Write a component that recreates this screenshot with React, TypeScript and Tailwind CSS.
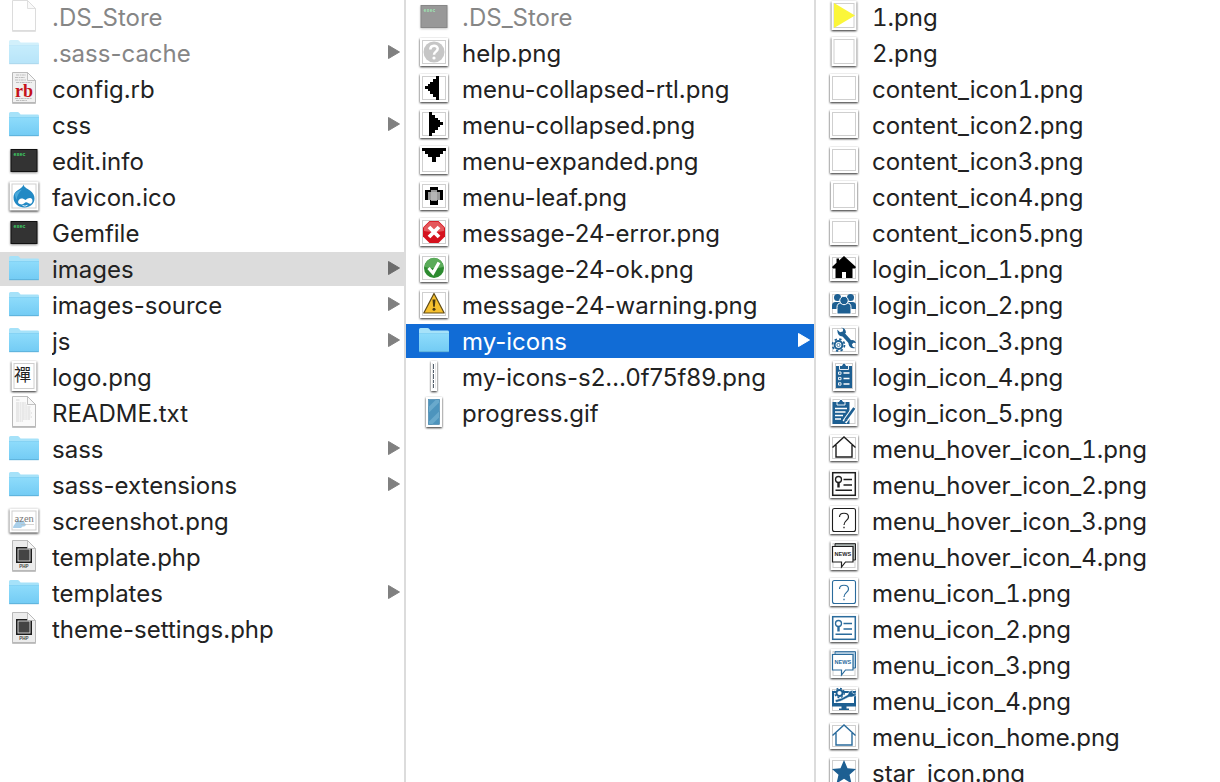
import { useState, type ReactNode } from "react";

type IconProps = { children: ReactNode; dim?: boolean };

function Glyph({ children, dim }: IconProps) {
  return (
    <svg
      viewBox="0 0 32 32"
      aria-hidden="true"
      className={`h-8 w-8 shrink-0 overflow-visible ${dim ? "opacity-50" : ""}`}
    >
      {children}
    </svg>
  );
}

function Folder({ dim }: { dim?: boolean }) {
  return (
    <Glyph dim={dim}>
      <defs>
        <linearGradient id="folderBody" x1="0" y1="0" x2="0" y2="1">
          <stop offset="0" stopColor="#8fdcfb" />
          <stop offset="1" stopColor="#72cbf4" />
        </linearGradient>
      </defs>
      <path d="M1 27V5.5Q1 4 2.5 4H9.5Q10.6 4 11.3 5L12.6 6.6H29.5Q31 6.6 31 8V27Z" fill="#a6e2f9" />
      <path d="M1 9H31V27Q31 28 30 28H2Q1 28 1 27Z" fill="url(#folderBody)" />
      <path d="M1 9.5H31" stroke="#7fcdf0" strokeWidth="0.6" />
      <path d="M1.2 27.7H30.8" stroke="#5aaed6" strokeWidth="0.9" />
    </Glyph>
  );
}

function Sheet({ children, dim, fill = "#fff" }: { children?: ReactNode; dim?: boolean; fill?: string }) {
  return (
    <Glyph dim={dim}>
      <path
        d="M4.5 0.5H19.5L27.5 8.5V30.5H4.5Z"
        fill={fill}
        stroke="#b4b4b4"
        strokeWidth="0.9"
        className="[filter:drop-shadow(0_1px_0.5px_rgba(0,0,0,0.25))]"
      />
      {children}
      <path d="M19.5 0.5V8.5H27.5Z" fill="#f7f7f7" stroke="#b4b4b4" strokeWidth="0.8" />
    </Glyph>
  );
}

function Exec({ dim }: { dim?: boolean }) {
  return (
    <Glyph dim={dim}>
      <rect x="2.5" y="5" width="27" height="23" rx="0.5" fill="#111" className="[filter:drop-shadow(0_1px_1px_rgba(0,0,0,0.45))]" />
      <rect x="3.5" y="6" width="25" height="21" fill="#333" />
      <text x="5.5" y="11.5" fontSize="5" fontWeight="700" fill="#3fd467" fontFamily="Liberation Mono, monospace">
        exec
      </text>
    </Glyph>
  );
}

function Thumb({ w = 28, h = 28, y, children, frame = true }: { w?: number; h?: number; y?: number; children?: ReactNode; frame?: boolean }) {
  const left = 16 - w / 2;
  const top = y ?? 16 - h / 2;
  return (
    <Glyph>
      <rect x={left} y={top} width={w} height={h} fill="#fff" className="[filter:drop-shadow(0_1px_1px_rgba(0,0,0,0.85))]" />
      {frame && <rect x={left + 2.5} y={top + 2.5} width={w - 5} height={h - 5} fill="#fff" stroke="#cfcfcf" />}
      {children}
    </Glyph>
  );
}

const RubyFile = () => (
  <Sheet fill="#f0f0f0">
    <path d="M8 3H18M7 5.5H17M7 8H18M8 10.5H24M7 26.5H24M8 28.5H19" stroke="#bdbdbd" strokeWidth="1.2" strokeDasharray="3 0.7 1.5 0.5" />
    <text x="16" y="24.6" fontSize="18" fontWeight="700" textAnchor="middle" fill="#c5121b" fontFamily="Liberation Serif, serif">
      rb
    </text>
  </Sheet>
);

const TextFile = () => (
  <Sheet fill="#fafafa">
    <path d="M8 4H12M8 7H18M8 9H19M8 11H23M8 13H22M8 15H23M8 17H24M8 19H23M8 21H24M8 23H22M8 25H15" stroke="#cdcdcd" strokeWidth="0.8" strokeDasharray="3 0.6 1.6 0.5" />
  </Sheet>
);

const PhpFile = () => (
  <Sheet fill="#ececec">
    <rect x="8" y="7" width="16" height="16" fill="#1c1c1c" />
    <rect x="10" y="9" width="12" height="12" fill="#444" stroke="#e2e2e2" strokeWidth="0.9" />
    <text x="16" y="28.3" fontSize="4.5" fontWeight="700" textAnchor="middle" fill="#444" fontFamily="Liberation Sans, sans-serif">
      PHP
    </text>
  </Sheet>
);

const Drupal = () => (
  <Thumb w={29} h={29}>
    <path d="M15.5 4.5C16 7.5 19 8.2 22 10.5C25 12.8 26.5 15.5 26.5 18.5C26.5 24 22 27.5 16.5 27.5C10.5 27.5 5.5 23.5 5.5 17.5C5.5 12.5 9 10.5 12 8.7C14.5 7.2 15 6 15.5 4.5Z" fill="#2289c4" />
    <path d="M6.5 14C8.5 11.5 11 10.5 14 9.5C11 12.5 9 15.5 8.5 20Z" fill="#4aa9da" />
    <path d="M10.5 20.5C12.5 17.5 15.5 18.5 17.5 20C19.5 18.3 22.5 17 24 19C25.5 22 23 24.5 21.3 23.6C20 23 19 21.8 17.7 22.3C16 23.5 14.5 24.7 12.5 24.3C10.3 23.9 9.5 22.3 10.5 20.5Z" fill="#fff" />
    <path d="M14.5 25.4Q17 27 19.5 25.2" fill="none" stroke="#fff" strokeWidth="0.9" />
  </Thumb>
);

const Logo = () => (
  <Thumb w={25} h={30}>
    <text x="14.5" y="20.5" fontSize="17" textAnchor="middle" fill="#222" fontFamily="Noto Sans CJK TC, sans-serif">
      禪
    </text>
  </Thumb>
);

const Screenshot = () => (
  <Thumb w={29} h={24} y={4.5}>
    <path d="M5 24C5 21.5 7 20.5 8 18C8.5 16 11 15.5 12.5 17C14.5 16 17 17.5 17 19.5C19.5 20.5 17 23 14.5 22.5L13 24Z" fill="#a9cfe9" />
    <text x="16.2" y="18" fontSize="10.5" textAnchor="middle" fill="#777" fontFamily="Liberation Serif, serif">
      azen
    </text>
    <path d="M13 20.5H26" stroke="#bbb" strokeWidth="0.6" />
  </Thumb>
);

const Help = () => (
  <Thumb>
    <circle cx="16" cy="16" r="10.5" fill="#c6c6c6" />
    <path d="M12.3 13.5C12.3 8.5 19.7 8.7 19.7 12.8C19.7 15.6 16 15.7 16 18.7" fill="none" stroke="#fff" strokeWidth="2.5" />
    <circle cx="16" cy="22" r="1.6" fill="#fff" />
  </Thumb>
);

const TriLeft = () => (
  <Thumb>
    <path d="M21 4V28H18V25H15V22H12V19H10V17H7V14H10V12H12V10H15V7H18V4Z" />
  </Thumb>
);

const TriRight = () => (
  <Thumb>
    <path d="M11 4V28H14V25H17V22H20V19H22V17H25V14H22V12H20V10H17V7H14V4Z" />
  </Thumb>
);

const TriDown = () => (
  <Thumb>
    <path d="M4 4H28V7H25V10H22V13H18V18H14V13H10V10H7V7H4Z" />
  </Thumb>
);

const Leaf = () => (
  <Thumb>
    <path d="M12 7H20V10H25V20H20V25H12V20H7V10H12Z" />
    <path d="M13 10H19V12H22V20H19V21H13V20H10V12H13Z" fill="#999" />
    <path d="M13 12H19V20H13Z" fill="#b4b4b4" />
  </Thumb>
);

const ErrorMark = () => (
  <Thumb>
    <path d="M11.5 5H20.5L27 11.5V20.5L20.5 27H11.5L5 20.5V11.5Z" fill="#d5121e" />
    <path d="M11.8 5.7H20.2L26 11.5V15Q16 17 6 15V11.5Z" fill="#e4585c" />
    <path d="M11 11L21 21M21 11L11 21" stroke="#fff" strokeWidth="3.8" />
  </Thumb>
);

const OkMark = () => (
  <Thumb>
    <circle cx="16" cy="16" r="10" fill="#2c8a2f" />
    <path d="M6.7 15A9.3 9.3 0 0 1 25.3 15Q16 17.5 6.7 15Z" fill="#5bab5a" />
    <path d="M10.5 16L15 21L21 10.5" fill="none" stroke="#fff" strokeWidth="3.2" />
  </Thumb>
);

const WarningMark = () => (
  <Thumb>
    <path d="M16 5.5L26.2 25H5.8Z" fill="#f6c02e" stroke="#5e4a17" strokeWidth="1.2" strokeLinejoin="round" />
    <path d="M14.5 11.5H17.5L16.8 18.8H15.2Z" fill="#4a3a12" />
    <circle cx="16" cy="21.3" r="1.5" fill="#4a3a12" />
  </Thumb>
);

const Sprite = () => (
  <Thumb w={6} h={30} frame={false}>
    <path d="M14.5 3V28.5M17.5 3V28.5" stroke="#e2e2e2" strokeWidth="0.8" />
    <path d="M15.5 4V28" stroke="#55616d" strokeWidth="1" strokeDasharray="5 1 3 1" />
  </Thumb>
);

const Progress = () => (
  <Thumb w={16} h={30} frame={false}>
    <rect x="10.5" y="3.5" width="11" height="25" fill="#4d94bd" />
    <path d="M10.5 11L18 3.5H21.5V6L10.5 17ZM10.5 26L21.5 15V21L14 28.5H10.5Z" fill="#69a9cc" />
    <rect x="10.5" y="3.5" width="11" height="25" fill="none" stroke="#3b7ea6" strokeWidth="0.6" />
  </Thumb>
);

const YellowPlay = () => (
  <Thumb w={25} h={29} y={1}>
    <path d="M6 3V28L27 15.5Z" fill="#fbf63a" />
  </Thumb>
);

const HomeSolid = () => (
  <Thumb h={26} y={3}>
    <path d="M16 4L28 15L27 16.5H24.5V26H18V20H14V26H7.5V16.5H5L4 15L8.5 10.8V6.5H11V8.6Z" />
  </Thumb>
);

const People = () => (
  <Thumb h={24} y={4}>
    <g fill="#1d5f92">
      <circle cx="9.5" cy="9.5" r="3.5" />
      <circle cx="22.5" cy="9.5" r="3.5" />
      <path d="M4 21V17.5Q4 14 7.5 14H24.5Q28 14 28 17.5V21Z" />
      <path d="M9 26V19.5Q9 15 13 15H19Q23 15 23 19.5V26Z" stroke="#fff" strokeWidth="1" />
      <circle cx="16" cy="12.5" r="4.2" stroke="#fff" strokeWidth="1" />
    </g>
  </Thumb>
);

const Tools = () => (
  <Thumb>
    <path d="M14.5 9.500L23.500 19.500" stroke="#1d5f92" strokeWidth="4" />
    <path d="M9.200 5.500L12 8.200L14.800 7.600L15.200 4.800L13 3.800Q17.500 3.500 18 8.500L14.500 12.500Q9.500 12.500 9.200 5.500Z" fill="#1d5f92" />
    <path d="M20.500 20Q20.500 16.500 24 16Q27 16 28 19L25.300 18.700L23.900 20.500L24.800 22.800L27.500 24Q22 25.500 20.500 20Z" fill="#1d5f92" />
    <circle cx="10.500" cy="21" r="3.900" fill="none" stroke="#1d5f92" strokeWidth="2" />
    <circle cx="10.500" cy="21" r="1.600" fill="none" stroke="#1d5f92" strokeWidth="0.8" />
    <circle cx="10.500" cy="21" r="6" fill="none" stroke="#1d5f92" strokeWidth="1.700" strokeDasharray="2.400 2.312" />
  </Thumb>
);

const Checklist = () => (
  <Thumb w={22} h={30}>
    <path d="M8 6H24V28H8Z" fill="#1d5f92" />
    <path d="M11.5 9.5V5.5H14Q14 3 16 3Q18 3 18 5.5H20.5V9.5Z" fill="#1d5f92" stroke="#fff" strokeWidth="0.9" />
    <path d="M15.5 13H21.5M15.5 18.5H21.5M15.5 24H21.5" stroke="#fff" strokeWidth="1.5" />
    <path d="M10.5 12H13V14.3H10.5ZM10.5 17.4H13V19.7H10.5ZM10.5 22.8H13V25.1H10.5Z" fill="none" stroke="#fff" strokeWidth="0.9" />
  </Thumb>
);

const ClipboardPen = () => (
  <Thumb w={27} h={29} y={1}>
    <path d="M4.5 6H21.5V28H4.5Z" fill="#1d5f92" />
    <path d="M9 9V5.5H11Q11.5 3.3 13 3.3Q14.5 3.3 15 5.500H17V9Z" fill="#1d5f92" stroke="#fff" strokeWidth="0.9" />
    <path d="M7 12.5H19M7 16H17.5M7 19.5H15M7 23H13" stroke="#fff" strokeWidth="1.3" />
    <path d="M26.8 11.5L16.500 26" stroke="#fff" strokeWidth="4.800" />
    <path d="M26.3 12L18 23.5" stroke="#1d5f92" strokeWidth="2.7" />
    <path d="M17 22.5L19.5 24.5L15.5 27Z" fill="#1d5f92" />
  </Thumb>
);

const HomeLine = ({ color }: { color: string }) => (
  <Thumb h={26} y={3}>
    <path d="M4.5 15.5L16 5L27.5 15.5M8 13V25H24V13" fill="none" stroke={color} strokeWidth="1.4" />
  </Thumb>
);

const CardLine = ({ color }: { color: string }) => (
  <Thumb frame={false} h={28}>
    <rect x="4.7" y="4.7" width="22.6" height="22.6" fill="#fff" stroke={color} strokeWidth="1.5" />
    <circle cx="10.5" cy="11.5" r="3" fill="none" stroke={color} strokeWidth="1.3" />
    <path d="M10.5 14.5V19.5" stroke={color} strokeWidth="2.4" />
    <path d="M15.5 11.5H24M15.5 17H24M7.5 22.3H24" stroke={color} strokeWidth="1.5" />
  </Thumb>
);

const QuestionBox = ({ color }: { color: string }) => (
  <Thumb frame={false}>
    <rect x="4.5" y="4.5" width="23" height="23" rx="2" fill="#fff" stroke={color} strokeWidth="1.1" />
    <path d="M11.5 13C11.5 8 20.5 8 20.5 13C20.5 16.5 16 16.3 16 21" fill="none" stroke={color} strokeWidth="1.2" />
    <path d="M16 22.8V24.3" stroke={color} strokeWidth="1.3" />
  </Thumb>
);

const News = ({ color, back }: { color: string; back: string }) => (
  <Thumb w={27} h={29} y={1}>
    <path d="M7 6.5V3.7H27.5V20H25" fill={back} stroke={color} strokeWidth="1" />
    <path d="M4.5 6.5H25V22H17.5L13.5 27V22H4.5Z" fill="#fff" stroke={color} strokeWidth="1.2" />
    <text x="14.8" y="16.3" fontSize="5.5" fontWeight="700" textAnchor="middle" fill={color} fontFamily="Liberation Sans, sans-serif">
      NEWS
    </text>
  </Thumb>
);

const Monitor = () => (
  <Thumb h={26} y={3}>
    <path d="M4 7H28V22.5H18.5V24.5H21V26H11V24.5H13.5V22.5H4Z" fill="#1d5f92" />
    <path d="M6 9H26V19H6Z" fill="#fff" />
    <circle cx="11.5" cy="9" r="3" fill="#fff" stroke="#1d5f92" strokeWidth="1.8" />
    <circle cx="11.5" cy="9" r="4.7" fill="none" stroke="#1d5f92" strokeWidth="1.4" strokeDasharray="1.85 1.84" />
    <path d="M7 16L14 14L20 10.5L21 7.5L25 6L24 8.5L26.5 10L28 8.5V11.5L24 13H21L13 17L8 18.5Z" fill="#1d5f92" stroke="#fff" strokeWidth="0.5" />
  </Thumb>
);

const Star = () => (
  <Thumb>
    <path d="M16 4L19.5 12.2L28 13L21.5 18.7L23.5 27.5L16 22.8L8.5 27.5L10.5 18.7L4 13L12.5 12.2Z" fill="#1d5f92" />
  </Thumb>
);

type Item = { name: string; icon: ReactNode; folder?: boolean; hidden?: boolean };

const INK = "#1e1e1e";
const BLUE = "#2a6b9c";

const theme: Item[] = [
  { name: ".DS_Store", icon: <Sheet dim />, hidden: true },
  { name: ".sass-cache", icon: <Folder dim />, folder: true, hidden: true },
  { name: "config.rb", icon: <RubyFile /> },
  { name: "css", icon: <Folder />, folder: true },
  { name: "edit.info", icon: <Exec /> },
  { name: "favicon.ico", icon: <Drupal /> },
  { name: "Gemfile", icon: <Exec /> },
  { name: "images", icon: <Folder />, folder: true },
  { name: "images-source", icon: <Folder />, folder: true },
  { name: "js", icon: <Folder />, folder: true },
  { name: "logo.png", icon: <Logo /> },
  { name: "README.txt", icon: <TextFile /> },
  { name: "sass", icon: <Folder />, folder: true },
  { name: "sass-extensions", icon: <Folder />, folder: true },
  { name: "screenshot.png", icon: <Screenshot /> },
  { name: "template.php", icon: <PhpFile /> },
  { name: "templates", icon: <Folder />, folder: true },
  { name: "theme-settings.php", icon: <PhpFile /> },
];

const images: Item[] = [
  { name: ".DS_Store", icon: <Exec dim />, hidden: true },
  { name: "help.png", icon: <Help /> },
  { name: "menu-collapsed-rtl.png", icon: <TriLeft /> },
  { name: "menu-collapsed.png", icon: <TriRight /> },
  { name: "menu-expanded.png", icon: <TriDown /> },
  { name: "menu-leaf.png", icon: <Leaf /> },
  { name: "message-24-error.png", icon: <ErrorMark /> },
  { name: "message-24-ok.png", icon: <OkMark /> },
  { name: "message-24-warning.png", icon: <WarningMark /> },
  { name: "my-icons", icon: <Folder />, folder: true },
  { name: "my-icons-s2…0f75f89.png", icon: <Sprite /> },
  { name: "progress.gif", icon: <Progress /> },
];

const icons: Item[] = [
  { name: "1.png", icon: <YellowPlay /> },
  { name: "2.png", icon: <Thumb w={25} h={29} y={1} /> },
  { name: "content_icon1.png", icon: <Thumb /> },
  { name: "content_icon2.png", icon: <Thumb /> },
  { name: "content_icon3.png", icon: <Thumb h={26} /> },
  { name: "content_icon4.png", icon: <Thumb w={26} h={29} y={1} /> },
  { name: "content_icon5.png", icon: <Thumb h={26} /> },
  { name: "login_icon_1.png", icon: <HomeSolid /> },
  { name: "login_icon_2.png", icon: <People /> },
  { name: "login_icon_3.png", icon: <Tools /> },
  { name: "login_icon_4.png", icon: <Checklist /> },
  { name: "login_icon_5.png", icon: <ClipboardPen /> },
  { name: "menu_hover_icon_1.png", icon: <HomeLine color={INK} /> },
  { name: "menu_hover_icon_2.png", icon: <CardLine color={INK} /> },
  { name: "menu_hover_icon_3.png", icon: <QuestionBox color={INK} /> },
  { name: "menu_hover_icon_4.png", icon: <News color={INK} back="#a8b0ae" /> },
  { name: "menu_icon_1.png", icon: <QuestionBox color={BLUE} /> },
  { name: "menu_icon_2.png", icon: <CardLine color={BLUE} /> },
  { name: "menu_icon_3.png", icon: <News color={BLUE} back="#b4cde0" /> },
  { name: "menu_icon_4.png", icon: <Monitor /> },
  { name: "menu_icon_home.png", icon: <HomeLine color={BLUE} /> },
  { name: "star_icon.png", icon: <Star /> },
];

type ColumnProps = {
  label: string;
  items: Item[];
  selected?: string;
  onSelect: (name: string) => void;
  rowClass: string;
  selectedClass: string;
  focused?: boolean;
  className?: string;
};

function Column({ label, items, selected, onSelect, rowClass, selectedClass, focused, className = "" }: ColumnProps) {
  return (
    <ul aria-label={label} className={`flex min-w-0 flex-col gap-0.5 overflow-hidden ${className}`}>
      {items.map((item) => {
        const active = item.name === selected;
        const tone = active && focused ? "text-white" : item.hidden ? "text-[#868686]" : "text-[#222]";
        const arrow = active && focused ? "text-white" : active ? "text-[#6c6c6c]" : "text-[#808080]";
        return (
          <li key={item.name} className="shrink-0">
            <button
              type="button"
              aria-pressed={active}
              onClick={() => onSelect(item.name)}
              className={`flex h-[34px] w-full items-start gap-3 text-left ${rowClass} ${active ? selectedClass : ""}`}
            >
              {item.icon}
              <span className={`min-w-0 flex-1 truncate leading-9 ${tone}`}>{item.name}</span>
              {item.folder && (
                <svg viewBox="0 0 12 32" aria-hidden="true" className={`h-8 w-3 shrink-0 ${arrow}`}>
                  <path d="M0.5 9.5L11.5 16L0.5 22.5Z" fill="currentColor" stroke="currentColor" strokeLinejoin="round" />
                </svg>
              )}
            </button>
          </li>
        );
      })}
    </ul>
  );
}

export default function App() {
  const [first, setFirst] = useState("images");
  const [second, setSecond] = useState("my-icons");
  const [third, setThird] = useState("");

  return (
    <main className="grid h-screen grid-cols-[406fr_410fr_404fr] overflow-hidden bg-white font-['Inter','Noto_Sans_CJK_TC',sans-serif] text-2xl">
      <Column
        label="Theme files"
        items={theme}
        selected={first}
        onSelect={setFirst}
        rowClass="pl-2 pr-1"
        selectedClass="bg-[#dcdcdc]"
        className="border-r-2 border-[#dcdcdc]"
      />
      <Column
        label="images"
        items={images}
        selected={second}
        onSelect={setSecond}
        rowClass="pl-3 pr-1"
        selectedClass="bg-[#116cd6]"
        focused
        className="border-r-2 border-[#dcdcdc]"
      />
      <Column
        label="my-icons"
        items={icons}
        selected={third}
        onSelect={setThird}
        rowClass="pl-3 pr-1"
        selectedClass="bg-[#dcdcdc]"
        className="tabular-nums"
      />
    </main>
  );
}
